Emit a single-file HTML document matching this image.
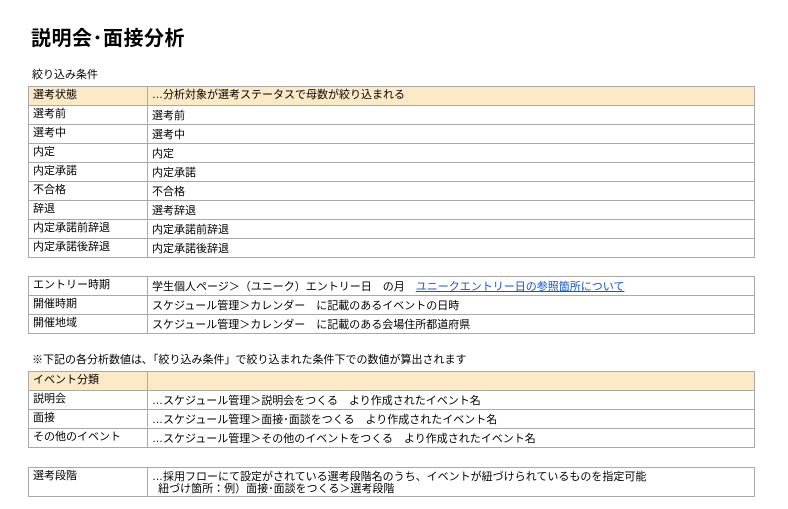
<!DOCTYPE html><html><head><meta charset="utf-8"><style>
body{margin:0;width:788px;height:509px;background:#fff;font-family:"Liberation Sans","Noto Sans CJK JP",sans-serif;color:#000;position:relative;overflow:hidden}
.t{position:absolute;font-size:20px;font-weight:bold;left:31px;top:22px;letter-spacing:0.5px}
.s{position:absolute;font-size:11px;left:32px;line-height:14px}
table{position:absolute;left:28px;width:727px;border-collapse:collapse;font-size:11px;table-layout:fixed}
td{border:1px solid #aaa;height:18px;padding:0 0 0 4px;vertical-align:top;line-height:14px;overflow:hidden}
td:first-child{width:114px}
td div{height:17px;padding-top:1px;overflow:hidden}
td:last-child div{padding-top:3px;height:15px}
tr.h td{background:#fce9c6}
tr.h td div{padding-top:1px;height:17px}
a{color:#1155cc;text-decoration:underline}
</style></head><body>
<div class="t">説明会･面接分析</div>
<div class="s" style="top:68px">絞り込み条件</div>
<table style="top:86px">
<tr class="h"><td><div>選考状態</div></td><td><div>…分析対象が選考ステータスで母数が絞り込まれる</div></td></tr>
<tr><td><div>選考前</div></td><td><div>選考前</div></td></tr>
<tr><td><div>選考中</div></td><td><div>選考中</div></td></tr>
<tr><td><div>内定</div></td><td><div>内定</div></td></tr>
<tr><td><div>内定承諾</div></td><td><div>内定承諾</div></td></tr>
<tr><td><div>不合格</div></td><td><div>不合格</div></td></tr>
<tr><td><div>辞退</div></td><td><div>選考辞退</div></td></tr>
<tr><td><div>内定承諾前辞退</div></td><td><div>内定承諾前辞退</div></td></tr>
<tr><td><div>内定承諾後辞退</div></td><td><div>内定承諾後辞退</div></td></tr>
</table>
<table style="top:276px">
<tr><td><div>エントリー時期</div></td><td><div>学生個人ページ＞（ユニーク）エントリー日　の月　<a>ユニークエントリー日の参照箇所について</a></div></td></tr>
<tr><td><div>開催時期</div></td><td><div>スケジュール管理＞カレンダー　に記載のあるイベントの日時</div></td></tr>
<tr><td><div>開催地域</div></td><td><div>スケジュール管理＞カレンダー　に記載のある会場住所都道府県</div></td></tr>
</table>
<div class="s" style="top:353px">※下記の各分析数値は､「絞り込み条件」で絞り込まれた条件下での数値が算出されます</div>
<table style="top:371px">
<tr class="h"><td><div>イベント分類</div></td><td><div></div></td></tr>
<tr><td><div>説明会</div></td><td><div>…スケジュール管理＞説明会をつくる　より作成されたイベント名</div></td></tr>
<tr><td><div>面接</div></td><td><div>…スケジュール管理＞面接･面談をつくる　より作成されたイベント名</div></td></tr>
<tr><td><div>その他のイベント</div></td><td><div>…スケジュール管理＞その他のイベントをつくる　より作成されたイベント名</div></td></tr>
</table>
<table style="top:467px">
<tr><td style="height:28px"><div>選考段階</div></td><td><div style="line-height:12px;height:25px;padding-top:3px">…採用フローにて設定がされている選考段階名のうち、イベントが紐づけられているものを指定可能<br>&nbsp;&nbsp;紐づけ箇所：例）面接･面談をつくる＞選考段階</div></td></tr>
</table>
</body></html>
